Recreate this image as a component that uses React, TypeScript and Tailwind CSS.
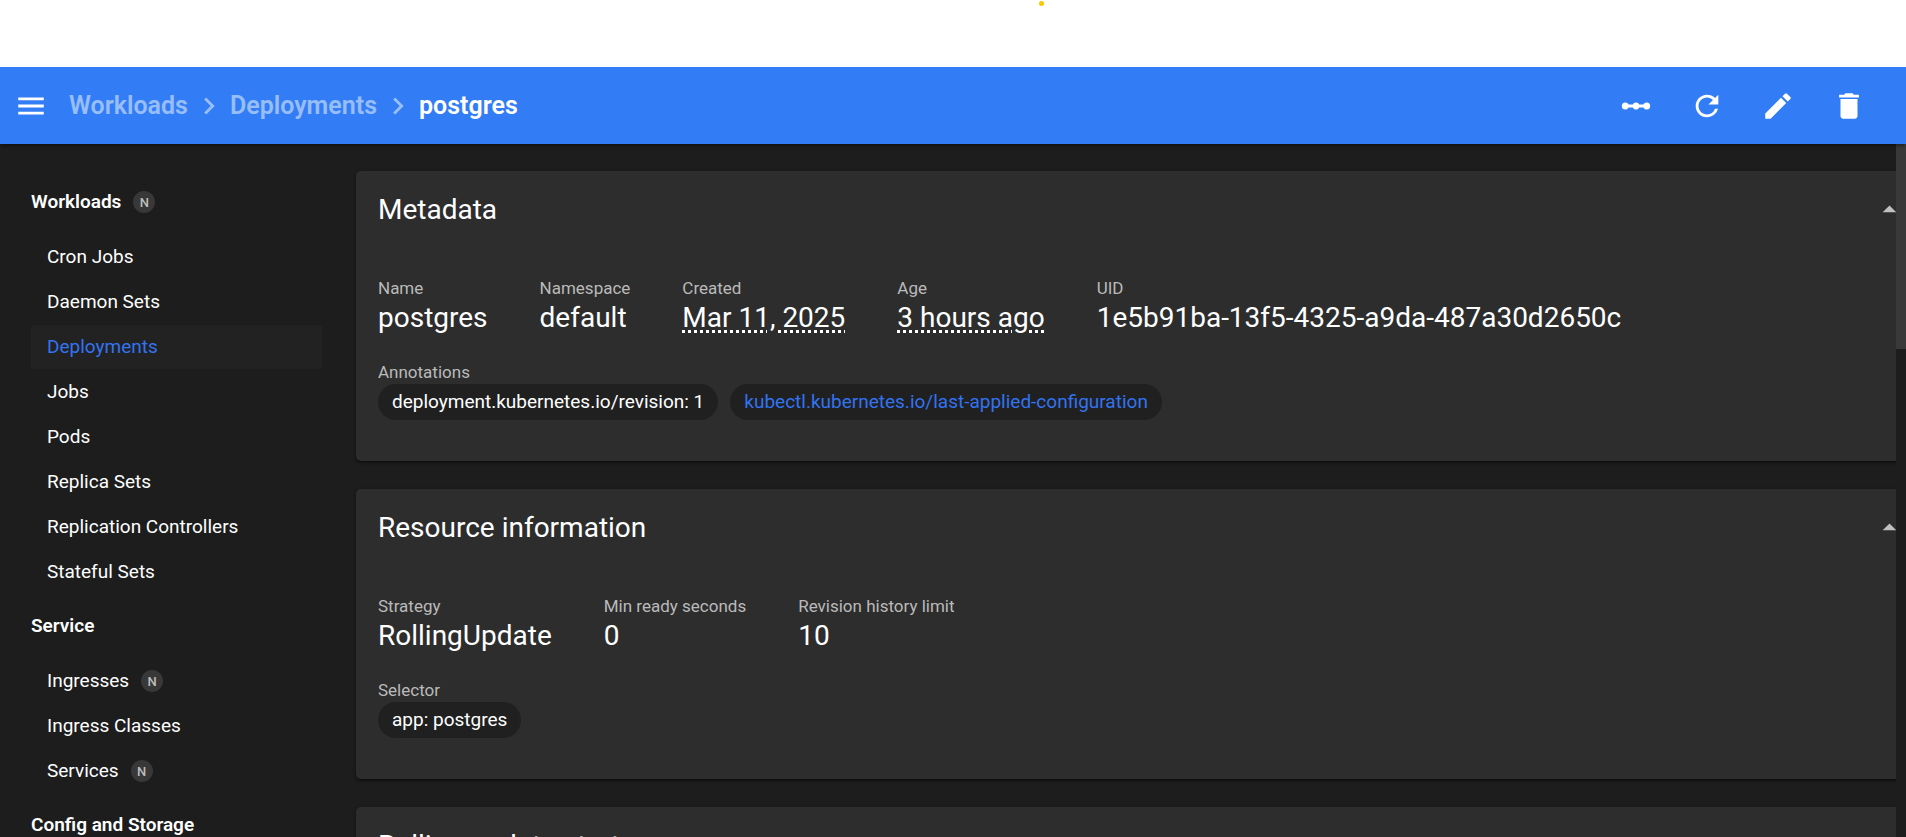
import type { ReactNode } from "react";
import {
  MdArrowDropUp,
  MdChevronRight,
  MdDelete,
  MdEdit,
  MdLinearScale,
  MdMenu,
  MdRefresh,
} from "react-icons/md";

type NavItem = { label: string; namespaced?: boolean; active?: boolean };
type NavGroup = { title: string; namespaced?: boolean; items: NavItem[] };

const groups: NavGroup[] = [
  {
    title: "Workloads",
    namespaced: true,
    items: [
      { label: "Cron Jobs" },
      { label: "Daemon Sets" },
      { label: "Deployments", active: true },
      { label: "Jobs" },
      { label: "Pods" },
      { label: "Replica Sets" },
      { label: "Replication Controllers" },
      { label: "Stateful Sets" },
    ],
  },
  {
    title: "Service",
    items: [
      { label: "Ingresses", namespaced: true },
      { label: "Ingress Classes" },
      { label: "Services", namespaced: true },
    ],
  },
  { title: "Config and Storage", items: [] },
];

const actions = [
  { label: "Scale resource", Icon: MdLinearScale },
  { label: "Restart resource", Icon: MdRefresh },
  { label: "Edit resource", Icon: MdEdit },
  { label: "Delete resource", Icon: MdDelete },
];

function NamespacedBadge() {
  return (
    <span className="ml-3 flex size-[22px] items-center justify-center rounded-full bg-[#383838] text-[13px] leading-none font-medium text-[#bdbdbd]">
      N
    </span>
  );
}

function Toolbar() {
  return (
    <header className="relative z-10 flex h-[77px] shrink-0 items-center bg-[#327df5] pt-px pr-[30px] pl-[14px] text-white shadow-[0_3px_3px_-1px_rgba(0,0,0,0.4)]">
      <button type="button" aria-label="Toggle navigation" className="mr-[21px]">
        <MdMenu className="size-[34px]" />
      </button>
      <nav aria-label="Breadcrumb" className="flex items-center gap-1 text-[25px] font-semibold">
        <a href="#workloads" className="text-white/50">Workloads</a>
        <MdChevronRight className="size-[34px] text-white/50" />
        <a href="#deployments" className="text-white/50">Deployments</a>
        <MdChevronRight className="size-[34px] text-white/50" />
        <span aria-current="page">postgres</span>
      </nav>
      <div className="ml-auto flex gap-4">
        {actions.map(({ label, Icon }) => (
          <button key={label} type="button" aria-label={label} className="flex size-[55px] items-center justify-center">
            <Icon className="size-[34px]" />
          </button>
        ))}
      </div>
    </header>
  );
}

function Sidebar() {
  return (
    <nav aria-label="Resources" className="w-[322px] shrink-0 overflow-hidden pt-9 pl-[31px] text-[19px]">
      {groups.map((group) => (
        <section key={group.title}>
          <a href="#group" className="flex h-11 items-center font-semibold">
            {group.title}
            {group.namespaced && <NamespacedBadge />}
          </a>
          <ul className="mt-[11px] mb-[10px] flex flex-col gap-px">
            {group.items.map((item) => (
              <li key={item.label}>
                <a
                  href="#item"
                  className={
                    item.active
                      ? "flex h-11 items-center rounded-[3px] bg-[#222222] pl-4 text-[#3273f0]"
                      : "flex h-11 items-center rounded-[3px] pl-4"
                  }
                >
                  {item.label}
                  {item.namespaced && <NamespacedBadge />}
                </a>
              </li>
            ))}
          </ul>
        </section>
      ))}
    </nav>
  );
}

function Card({ title, children }: { title: string; children?: ReactNode }) {
  return (
    <section className="-mr-6 shrink-0 rounded-[5px] bg-[#2d2d2d] pl-[22px] shadow-[0_2px_2px_rgba(0,0,0,0.35),0_1px_4px_rgba(0,0,0,0.2)]">
      <div className="flex h-[77px] items-center justify-between pr-[14px]">
        <h2 className="text-[28px]">{title}</h2>
        <button type="button" aria-label={"Collapse " + title} className="text-[#c0c0c0]">
          <MdArrowDropUp className="size-[33px]" />
        </button>
      </div>
      <div className="flex flex-col gap-[25px] pt-[29px] pb-[41px]">{children}</div>
    </section>
  );
}

function Property({ label, children }: { label: string; children: ReactNode }) {
  return (
    <div>
      <dt className="text-[17px] leading-[22px] text-[#bababa]">{label}</dt>
      <dd className="text-[28px] leading-[37px]">{children}</dd>
    </div>
  );
}

function Chips({ label, children }: { label: string; children: ReactNode }) {
  return (
    <div>
      <h3 className="text-[17px] leading-[22px] text-[#bababa]">{label}</h3>
      <div className="mt-px flex gap-3">{children}</div>
    </div>
  );
}

const chip = "flex h-9 items-center rounded-full bg-[#202020] px-[14px] text-[19px]";
const dotted = "underline decoration-dotted decoration-[3px] underline-offset-[3px]";

export default function App() {
  return (
    <div className="flex h-screen flex-col overflow-hidden bg-[#1d1d1d] font-['Roboto',sans-serif] text-white">
      <div className="h-[67px] shrink-0 bg-white">
        <div className="ml-[54.5%] pt-px">
          <div className="size-[5px] rounded-full bg-[#fbc800]" />
        </div>
      </div>
      <Toolbar />
      <div className="flex min-h-0 flex-1">
        <Sidebar />
        <main className="flex min-w-0 flex-1 flex-col gap-7 overflow-hidden pt-[27px] pl-[34px]">
          <Card title="Metadata">
            <dl className="flex gap-[52px]">
              <Property label="Name">postgres</Property>
              <Property label="Namespace">default</Property>
              <Property label="Created">
                <span className={dotted}>Mar 11, 2025</span>
              </Property>
              <Property label="Age">
                <span className={dotted}>3 hours ago</span>
              </Property>
              <Property label="UID">1e5b91ba-13f5-4325-a9da-487a30d2650c</Property>
            </dl>
            <Chips label="Annotations">
              <span className={chip}>deployment.kubernetes.io/revision: 1</span>
              <button type="button" className={chip + " text-[#3273f0]"}>
                kubectl.kubernetes.io/last-applied-configuration
              </button>
            </Chips>
          </Card>
          <Card title="Resource information">
            <dl className="flex gap-[52px]">
              <Property label="Strategy">RollingUpdate</Property>
              <Property label="Min ready seconds">0</Property>
              <Property label="Revision history limit">10</Property>
            </dl>
            <Chips label="Selector">
              <span className={chip}>app: postgres</span>
            </Chips>
          </Card>
          <Card title="Rolling update strategy" />
        </main>
        <div className="w-[10px] shrink-0">
          <div className="h-[205px] bg-[#393939]" />
        </div>
      </div>
    </div>
  );
}
